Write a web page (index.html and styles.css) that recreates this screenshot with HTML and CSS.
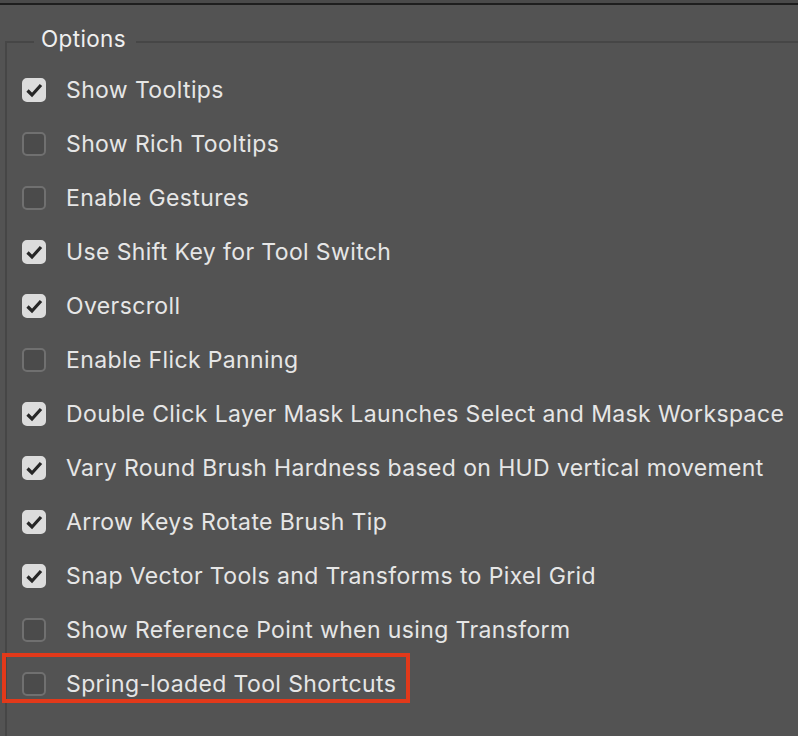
FILE: index.html
```html
<!DOCTYPE html>
<html>
<head>
<meta charset="utf-8">
<link rel="stylesheet" href="styles.css">
</head>
<body>
<div class="topbar"></div>
<fieldset class="group">
  <legend class="legend">Options</legend>
  <div class="row"><span class="cb on"><svg viewBox="0 0 24 24"><path d="M5.5 12.5 L10 17 L19 7"/></svg></span><span class="label">Show Tooltips</span></div>
  <div class="row"><span class="cb"></span><span class="label">Show Rich Tooltips</span></div>
  <div class="row"><span class="cb"></span><span class="label">Enable Gestures</span></div>
  <div class="row"><span class="cb on"><svg viewBox="0 0 24 24"><path d="M5.5 12.5 L10 17 L19 7"/></svg></span><span class="label">Use Shift Key for Tool Switch</span></div>
  <div class="row"><span class="cb on"><svg viewBox="0 0 24 24"><path d="M5.5 12.5 L10 17 L19 7"/></svg></span><span class="label">Overscroll</span></div>
  <div class="row"><span class="cb"></span><span class="label">Enable Flick Panning</span></div>
  <div class="row"><span class="cb on"><svg viewBox="0 0 24 24"><path d="M5.5 12.5 L10 17 L19 7"/></svg></span><span class="label">Double Click Layer Mask Launches Select and Mask Workspace</span></div>
  <div class="row"><span class="cb on"><svg viewBox="0 0 24 24"><path d="M5.5 12.5 L10 17 L19 7"/></svg></span><span class="label">Vary Round Brush Hardness based on HUD vertical movement</span></div>
  <div class="row"><span class="cb on"><svg viewBox="0 0 24 24"><path d="M5.5 12.5 L10 17 L19 7"/></svg></span><span class="label">Arrow Keys Rotate Brush Tip</span></div>
  <div class="row"><span class="cb on"><svg viewBox="0 0 24 24"><path d="M5.5 12.5 L10 17 L19 7"/></svg></span><span class="label">Snap Vector Tools and Transforms to Pixel Grid</span></div>
  <div class="row"><span class="cb"></span><span class="label">Show Reference Point when using Transform</span></div>
  <div class="row hl"><span class="cb"></span><span class="label">Spring-loaded Tool Shortcuts</span></div>
</fieldset>
</body>
</html>
```
FILE: styles.css
```css
html, body {
  margin: 0;
  padding: 0;
  background: #535353;
  overflow: hidden;
  height: 736px;
}
body {
  font-family: "Inter", "Open Sans", sans-serif;
  color: #e6e6e6;
}
.topbar {
  height: 3px;
  background: #4a4a4a;
  border-bottom: 2px solid #1e1e1e;
}
.group {
  margin: 21px 0 0 5px;
  width: 820px;
  border: 2px solid #464646;
  border-right: none;
  padding: 5px 0 40px 15px;
  min-height: 700px;
}
.legend {
  font-size: 22.5px;
  letter-spacing: 0.35px;
  padding: 0 10px 6px 7px;
  margin-left: 12px;
  line-height: 26px;
  color: #efefef;
}
.row {
  display: flex;
  align-items: center;
  height: 54px;
}
.cb {
  box-sizing: border-box;
  width: 24px;
  height: 24px;
  border-radius: 5px;
  border: 2px solid #707070;
  background: #4b4b4b;
  flex: none;
  display: flex;
}
.cb.on {
  background: #dcdcdc;
  border-color: #dcdcdc;
}
.cb svg {
  width: 24px;
  height: 24px;
  margin: -2px;
  fill: none;
  stroke: #262626;
  stroke-width: 3.2;
  stroke-linecap: butt;
  stroke-linejoin: miter;
}
.label {
  margin-left: 20px;
  font-size: 23px;
  line-height: 24px;
  letter-spacing: 0.38px;
  white-space: nowrap;
}
.row.hl {
  width: fit-content;
  height: auto;
  border: 4px solid #e2391a;
  margin: -4px 0 0 -20px;
  padding: 15px 10px 3px 16px;
}
```
